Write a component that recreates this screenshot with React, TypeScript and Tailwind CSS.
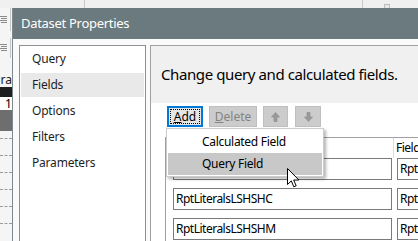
import React from "react";

const font = { fontFamily: '"Noto Sans", "Open Sans", sans-serif' };

function Burger() {
  return (
    <svg width="8" height="8" viewBox="0 0 8 8">
      <path d="M0 0.5H7M1 2.5H7M0 4.5H7M1 6.5H7" stroke="#8a8a8a" strokeWidth="1" />
    </svg>
  );
}

function Arrow({ down }: { down?: boolean }) {
  return (
    <svg width="9" height="10" viewBox="0 0 9 10" style={down ? { transform: "rotate(180deg)" } : undefined}>
      <path d="M4.5 0.5L8.5 5H6V9.5H3V5H0.5Z" fill="#9a9a9a" stroke="#8a8a8a" strokeWidth="0.6" />
    </svg>
  );
}

function Cursor() {
  return (
    <svg width="13" height="20" viewBox="0 0 13 20">
      <path
        d="M0.5 0.5V16.5L4.3 12.9L6.8 18.8L9.2 17.8L6.7 12H11.9Z"
        fill="#fff"
        stroke="#000"
        strokeWidth="1"
        strokeLinejoin="miter"
      />
    </svg>
  );
}

export default function App() {
  const rows = [
    { a: "", b: "RptLiteralsLSHSHB" },
    { a: "RptLiteralsLSHSHC", b: "RptLiteralsLSHSHC" },
    { a: "RptLiteralsLSHSHM", b: "RptLiteralsLSHSHM" },
  ];
  return (
    <div
      className="relative w-[418px] h-[241px] overflow-hidden bg-[#f0f0f0] flex flex-col text-[#1a1a1a]"
      style={font}
    >
      {/* top strip of the window behind */}
      <div className="h-[8px] shrink-0 flex bg-[#f0f0f0]">
        <div className="w-[85px] border-r border-[#c9c9c9]" />
        <div className="w-[278px] border-r border-[#c9c9c9]" />
        <div className="w-[21px]" />
        <div className="w-[6px] h-[4px] mt-[4px] border border-[#bdbdbd] border-b-0 bg-[#e8e8e8]" />
      </div>

      <div className="flex-1 flex min-h-0">
        {/* left strip of the window behind */}
        <div className="w-[12px] shrink-0 flex flex-col bg-[#f5f5f5]">
          <div className="h-[23px] flex">
            <div className="w-[10px] pt-[8px]">
              <Burger />
            </div>
            <div className="w-[1px] bg-[#c6c6c6]" />
          </div>
          <div className="h-[7px]" />
          <div className="h-[20px] flex">
            <div className="w-[10px] pt-[6px]">
              <Burger />
            </div>
            <div className="w-[1px] bg-[#c6c6c6]" />
          </div>
          <div className="h-[14px]" />
          <div className="h-[15px] flex justify-end items-center overflow-hidden whitespace-nowrap text-[12px] text-[#222]">
            Para
          </div>
          <div className="h-[10px] bg-[#1f1f1f]" />
          <div className="h-[13px] bg-white flex items-center pl-[5px] text-[12px] text-black leading-none">1</div>
          <div className="h-[21px] bg-[#6e6e6e]" />
          <div className="h-[7px]" />
          {[0, 1, 2, 3, 4, 5].map((i) => (
            <div key={i} className="h-[17px] border-t border-dashed border-[#9c9c9c]" />
          ))}
        </div>

        {/* dialog */}
        <div className="flex-1 flex flex-col border-l border-[#7d8a8d] min-w-0">
          <div className="h-[31px] shrink-0 bg-[#6b7a7e] flex items-center pl-[8px] text-white text-[13px] tracking-[-0.3px]">
            Dataset Properties
          </div>
          <div className="flex-1 flex bg-[#fafafa] pt-[6px] pl-[6px] gap-[4px] min-h-0">
            {/* nav */}
            <div className="w-[127px] shrink-0 bg-white border border-b-0 border-[#8c9096] pt-[1px] px-[1px] flex flex-col gap-[2px] text-[12px] tracking-[-0.2px] text-[#1e1e1e]">
              {["Query", "Fields", "Options", "Filters", "Parameters"].map((t) => (
                <div
                  key={t}
                  className={
                    "h-[24px] flex items-center pl-[11px] " + (t === "Fields" ? "bg-[#e9e9e9]" : "")
                  }
                >
                  {t}
                </div>
              ))}
            </div>

            {/* right panel */}
            <div className="flex-1 flex flex-col border-l border-t border-[#a0a0a0] bg-white min-w-0 overflow-hidden">
              <div className="h-[57px] shrink-0 bg-[#f0f0f0] flex items-center pl-[10px] text-[15px] tracking-[-0.4px] text-black whitespace-nowrap">
                Change query and calculated fields.
              </div>
              <div className="pl-[16px] pt-[3px] flex gap-[6px] text-[12px]">
                <div className="w-[36px] h-[21px] border-2 border-[#0078d7] bg-[#e5e5e5] p-[1px]">
                  <div className="w-full h-full border border-dotted border-black flex items-center justify-center text-black leading-none">
                    <span>
                      <span className="underline">A</span>dd
                    </span>
                  </div>
                </div>
                <div className="w-[48px] h-[21px] border border-[#bfbfbf] bg-[#cccccc] flex items-center justify-center text-[#838383] leading-none">
                  <span>
                    <span className="underline">D</span>elete
                  </span>
                </div>
                <div className="w-[25px] h-[21px] border border-[#bfbfbf] bg-[#cccccc] flex items-center justify-center">
                  <Arrow />
                </div>
                <div className="w-[26px] h-[21px] ml-[1px] border border-[#bfbfbf] bg-[#cccccc] flex items-center justify-center">
                  <Arrow down />
                </div>
              </div>

              {/* fields grid */}
              <div className="ml-[14px] mt-[10px] flex-1 border-l border-t border-[#a0a0a0] flex flex-col text-[12px] tracking-[-0.5px] text-black whitespace-nowrap">
                <div className="h-[20px] shrink-0 flex">
                  <div className="w-[228px] shrink-0 border-r border-[#dcdcdc]" />
                  <div className="flex items-center pl-[2px]">Field Source</div>
                </div>
                <div className="flex flex-col gap-[8px]">
                  {rows.map((r, i) => (
                    <div key={i} className="flex h-[22px]">
                      <div className="ml-[7px] w-[219px] shrink-0 border border-[#7a7a7a] flex items-center pl-[2px]">
                        {r.a}
                      </div>
                      <div className="ml-[5px] w-[100px] shrink-0 border border-[#7a7a7a] flex items-center pl-[2px]">
                        {r.b}
                      </div>
                    </div>
                  ))}
                </div>
              </div>
            </div>
          </div>
        </div>
      </div>

      {/* Add dropdown menu */}
      <div className="absolute left-[166px] top-[128px] w-[158px] h-[49px] bg-white border border-[#cccccc] shadow-[2px_2px_3px_rgba(0,0,0,0.3)] pt-[2px] px-[1px] flex flex-col text-[12px] tracking-[-0.3px] text-black">
        <div className="h-[22px] flex items-center pl-[34px]">Calculated Field</div>
        <div className="h-[22px] flex items-center pl-[34px] bg-[#c8c8c8]">Query Field</div>
      </div>

      <div className="absolute left-[287px] top-[168px]">
        <Cursor />
      </div>
    </div>
  );
}
